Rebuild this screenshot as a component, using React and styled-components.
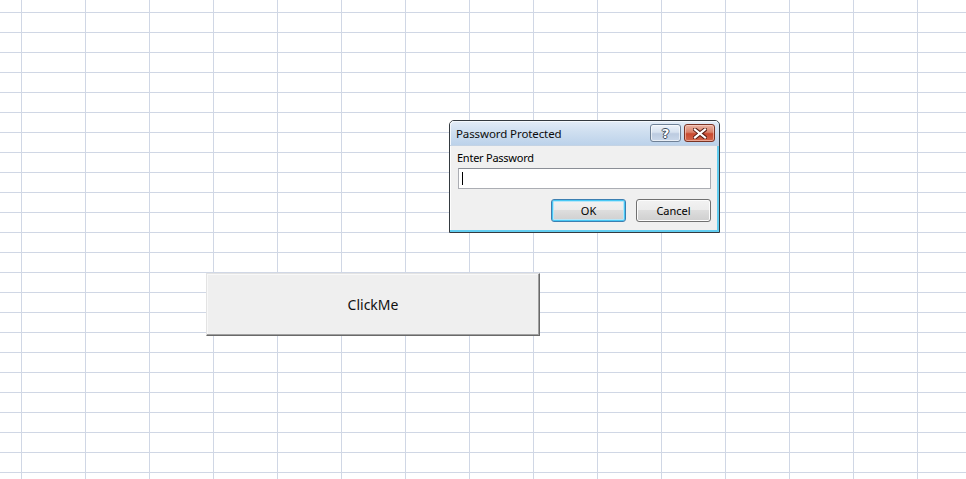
import React from "react";
import styled, { createGlobalStyle } from "styled-components";

const GlobalStyle = createGlobalStyle`
  html, body { margin: 0; padding: 0; background: #fff; overflow: hidden; }
  * { box-sizing: border-box; }
`;

const Sheet = styled.div`
  position: relative;
  width: 966px;
  height: 479px;
  background-color: #fff;
  background-image:
    linear-gradient(to right, #d0d7e5 1px, transparent 1px),
    linear-gradient(to bottom, #d0d7e5 1px, transparent 1px);
  background-size: 64px 20px, 64px 20px;
  background-position: 21px 0, 0 12px;
  font-family: "Noto Sans", "Liberation Sans", sans-serif;
`;

const SheetButton = styled.button`
  position: absolute;
  left: 206px;
  top: 273px;
  width: 334px;
  height: 63px;
  margin: 0;
  padding: 0;
  background: #efefef;
  border-style: solid;
  border-width: 1px;
  border-color: #e3e3e3 #696969 #696969 #e3e3e3;
  box-shadow: inset -1px -1px 0 #a0a0a0, inset 1px 1px 0 #f8f8f8;
  font-family: "Noto Sans", sans-serif;
  font-size: 14px;
  color: #111;
  display: flex;
  align-items: center;
  justify-content: center;
  cursor: default;
`;

const Dialog = styled.div`
  position: absolute;
  left: 449px;
  top: 120px;
  width: 271px;
  height: 113px;
  border: 1px solid #343a40;
  border-radius: 5px 5px 0 0;
  background: #f0f0f0;
  box-shadow: inset -2px -2px 0 #62cdf0, inset 1px 0 0 #fdfdfd;
  display: flex;
  flex-direction: column;
  overflow: hidden;
  font-family: "Noto Sans", sans-serif;
  font-size: 11px;
  color: #000;
`;

const TitleBar = styled.div`
  height: 25px;
  flex: none;
  display: flex;
  align-items: center;
  padding: 0 4px 0 6px;
  background: linear-gradient(to bottom, #e3ecf7 0%, #cfdff0 45%, #bcd2ea 100%);
  border-bottom: 1px solid #c4d3e4;
  border-radius: 4px 4px 0 0;
  box-shadow: inset 1px 1px 0 #f4f8fc;
`;

const Title = styled.span`
  flex: 1;
  font-size: 11.5px;
  letter-spacing: -0.1px;
  color: #0c0c0c;
  padding-top: 1px;
`;

const TitleButtons = styled.div`
  display: flex;
  gap: 3px;
  align-items: center;
`;

const CaptionButton = styled.div`
  width: 31px;
  height: 18px;
  border-radius: 3px;
  display: flex;
  align-items: center;
  justify-content: center;
  border: 1px solid ${(p) => (p.$close ? "#7a3324" : "#6f8196")};
  background: ${(p) =>
    p.$close
      ? "linear-gradient(to bottom, #eab3a3 0%, #d9826b 45%, #c9492f 55%, #d2674c 100%)"
      : "linear-gradient(to bottom, #eef3fa 0%, #d6e1ef 45%, #bccbe0 55%, #cad8ea 100%)"};
  box-shadow: inset 0 0 0 1px ${(p) => (p.$close ? "rgba(255,220,210,0.55)" : "rgba(255,255,255,0.6)")};
`;

const HelpGlyph = styled.span`
  font-family: "DejaVu Sans", sans-serif;
  font-weight: bold;
  font-size: 13px;
  line-height: 1;
  color: #fff;
  text-shadow: 1px 0 0 #3f4b5c, -1px 0 0 #3f4b5c, 0 1px 0 #3f4b5c, 0 -1px 0 #3f4b5c;
`;

const Body = styled.div`
  flex: 1;
  display: flex;
  flex-direction: column;
  padding: 4px 9px 0 7px;
`;

const Label = styled.div`
  height: 16px;
  line-height: 16px;
  font-size: 11px;
  letter-spacing: -0.25px;
  color: #000;
`;

const Input = styled.div`
  margin: 2px 0 0 1px;
  height: 21px;
  width: 253px;
  background: #fff;
  border: 1px solid #abadb3;
  border-top-color: #8a8e96;
  display: flex;
  align-items: center;
  padding-left: 3px;
`;

const Caret = styled.span`
  width: 1px;
  height: 13px;
  background: #000;
`;

const ButtonRow = styled.div`
  margin-top: 10px;
  display: flex;
  justify-content: flex-end;
  gap: 10px;
  margin-right: -1px;
`;

const DlgButton = styled.div`
  width: 75px;
  height: 23px;
  border-radius: 3px;
  border: 1px solid ${(p) => (p.$default ? "#3c7fb1" : "#707070")};
  background: linear-gradient(to bottom, #f2f2f2 0%, #ebebeb 50%, #dddddd 50%, #cfcfcf 100%);
  box-shadow: ${(p) =>
    p.$default
      ? "inset 0 0 0 1px #48c8f4, inset 0 0 0 2px #b8e6f8"
      : "inset 0 0 0 1px #fcfcfc"};
  display: flex;
  align-items: center;
  justify-content: center;
  font-size: 11px;
  color: #000;
`;

function CloseIcon() {
  return (
    <svg width="14" height="11" viewBox="0 0 14 11">
      <path d="M2 1.5 L12 9.5 M12 1.5 L2 9.5" stroke="#5a1e14" strokeWidth="4.2" strokeLinecap="square" />
      <path d="M2 1.5 L12 9.5 M12 1.5 L2 9.5" stroke="#ffffff" strokeWidth="2.2" strokeLinecap="square" />
    </svg>
  );
}

export default function App() {
  return (
    <>
      <GlobalStyle />
      <Sheet>
        <SheetButton>ClickMe</SheetButton>
        <Dialog>
          <TitleBar>
            <Title>Password Protected</Title>
            <TitleButtons>
              <CaptionButton>
                <HelpGlyph>?</HelpGlyph>
              </CaptionButton>
              <CaptionButton $close>
                <CloseIcon />
              </CaptionButton>
            </TitleButtons>
          </TitleBar>
          <Body>
            <Label>Enter Password</Label>
            <Input>
              <Caret />
            </Input>
            <ButtonRow>
              <DlgButton $default>OK</DlgButton>
              <DlgButton>Cancel</DlgButton>
            </ButtonRow>
          </Body>
        </Dialog>
      </Sheet>
    </>
  );
}
